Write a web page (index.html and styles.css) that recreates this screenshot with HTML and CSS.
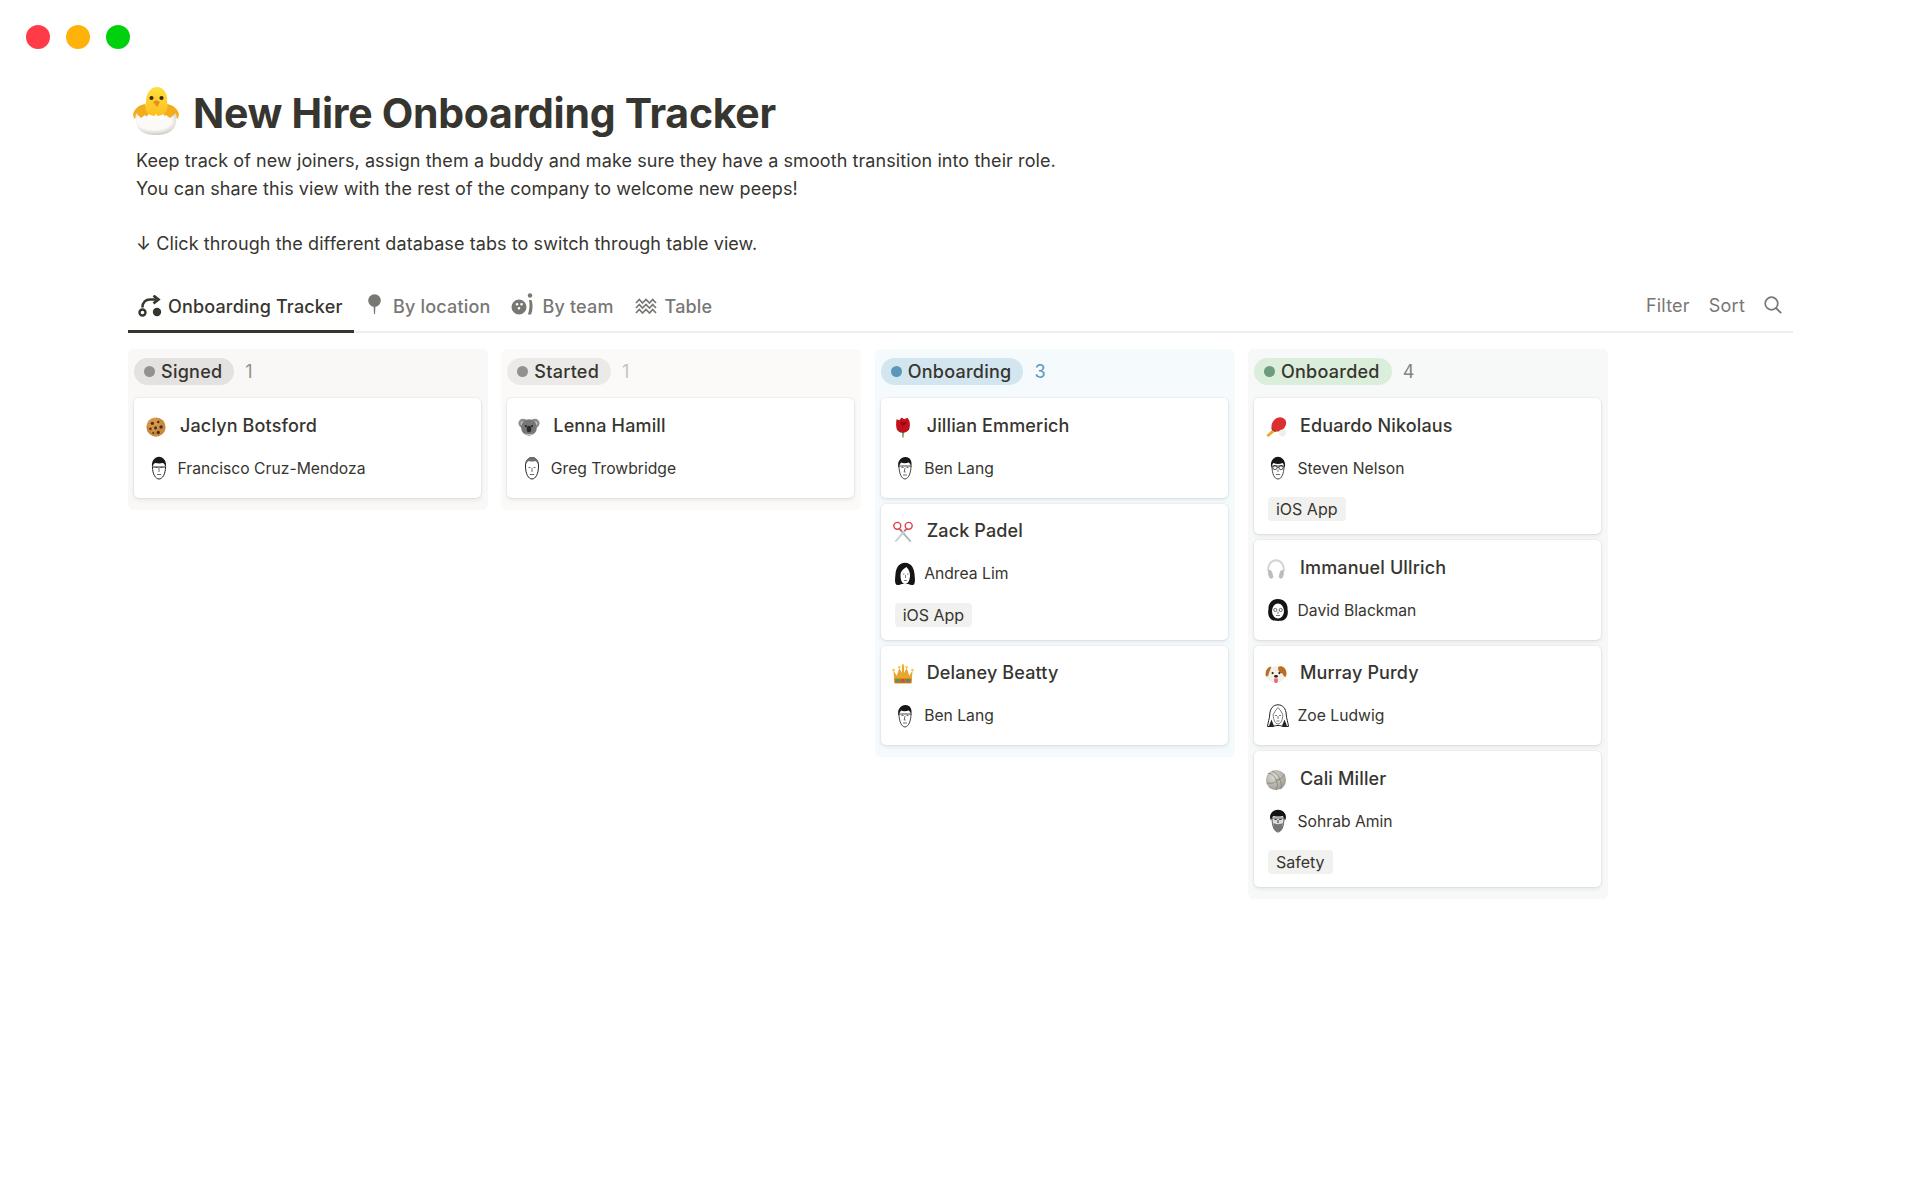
FILE: index.html
```html
<!DOCTYPE html>
<html lang="en">
<head>
<meta charset="utf-8">
<title>New Hire Onboarding Tracker</title>
<link rel="stylesheet" href="styles.css">
</head>
<body>
<svg class="defs" aria-hidden="true">
  <defs>
    <radialGradient id="g-egg" cx="0.45" cy="0.35" r="0.75"><stop offset="0.55" stop-color="#fbfaf6"/><stop offset="1" stop-color="#bdb9ae"/></radialGradient>
    <linearGradient id="g-chick" x1="0" y1="0" x2="0" y2="1"><stop offset="0" stop-color="#ffdf3c"/><stop offset="1" stop-color="#fbbf1f"/></linearGradient>
    <radialGradient id="g-ball" cx="0.4" cy="0.35" r="0.75"><stop offset="0" stop-color="#dddbd4"/><stop offset="1" stop-color="#97948b"/></radialGradient>
    <symbol id="e-cookie" viewBox="0 0 24 24"><circle cx="12" cy="12" r="10.5" fill="#c98a3c"/><circle cx="10" cy="9" r="7" fill="#dda04e" opacity=".6"/><circle cx="8" cy="8" r="1.8" fill="#4d3022"/><circle cx="14.5" cy="6.5" r="1.4" fill="#4d3022"/><circle cx="17.5" cy="12" r="1.9" fill="#4d3022"/><circle cx="11.5" cy="13" r="1.7" fill="#4d3022"/><circle cx="6" cy="14" r="1.4" fill="#4d3022"/><circle cx="14.5" cy="18" r="1.8" fill="#4d3022"/><circle cx="9" cy="18.5" r="1.1" fill="#4d3022"/></symbol>
    <symbol id="e-koala" viewBox="0 0 24 24"><circle cx="5.5" cy="8" r="5" fill="#8d8c8a"/><circle cx="18.5" cy="8" r="5" fill="#8d8c8a"/><circle cx="5.5" cy="8.5" r="2.7" fill="#c6c4bf"/><circle cx="18.5" cy="8.5" r="2.7" fill="#c6c4bf"/><ellipse cx="12" cy="12.5" rx="8.6" ry="9" fill="#777674"/><circle cx="8.6" cy="11" r="1.1" fill="#1e1e1e"/><circle cx="15.4" cy="11" r="1.1" fill="#1e1e1e"/><ellipse cx="12" cy="14.2" rx="2.5" ry="3.6" fill="#2b2b2b"/><path d="M6 18.5c3 3.5 9 3.5 12 0-2 .8-3.7 1.2-6 1.2s-4-.4-6-1.2z" fill="#c6c4bf"/></symbol>
    <symbol id="e-rose" viewBox="0 0 24 24"><path d="M11.3 17h1.4l-.2 6.5h-1z" fill="#3f6b2a"/><path d="M4.7 13c1.500 4 4 5 7 5.500 3-.5 5.500-1.500 7-5.500-1.500 3-3 3.500-7 3.500s-5.500-.5-7-3.500z" fill="#3f6b2a"/><path d="M5 3.500l3 1.200L10.500 1.500l2.800 2L17 2l2 3.500c.8 3.500.8 7-.5 9.500-1.800 2-4.500 2.800-6.700 2.800S7 17 5.300 14.800C4.200 11 4.300 7 5 3.500z" fill="#c4101c"/><path d="M9 6c2 1.500 4.500 1.500 6.500 0-.2 2.500-1.500 4-3 4.500C10.700 10 9.300 8.500 9 6z" fill="#8c0a14"/></symbol>
    <symbol id="e-scissors" viewBox="0 0 24 24"><path d="M8 10l11.500 13 1.700-1L10 9z" fill="#a9b4bc"/><path d="M16 10L4.500 23l-1.700-1L14 9z" fill="#c5ced4"/><circle cx="5.800" cy="5.300" r="3.800" fill="none" stroke="#e0434b" stroke-width="1.600"/><circle cx="18.200" cy="5.300" r="3.800" fill="none" stroke="#e0434b" stroke-width="1.600"/><path d="M8 8.500l2.500 2.500M16 8.500L13.500 11" stroke="#e0434b" stroke-width="1.600"/></symbol>
    <symbol id="e-crown" viewBox="0 0 24 24"><path d="M1.500 8l3.700 6L8 5.500l4 7.500 4-7.500 2.800 8.500L22.500 8l-1.300 14H2.800z" fill="#e8a62c"/><path d="M2.600 17h18.800l-.4 5H3z" fill="#b97a1e"/><circle cx="1.800" cy="7.500" r="1.300" fill="#f6c344"/><circle cx="8" cy="4.500" r="1.300" fill="#f6c344"/><circle cx="12" cy="2.500" r="1.300" fill="#f6c344"/><circle cx="16" cy="4.500" r="1.300" fill="#f6c344"/><circle cx="22.200" cy="7.500" r="1.300" fill="#f6c344"/><path d="M12 3v10" stroke="#e8a62c" stroke-width="2.400"/><circle cx="6.500" cy="19" r="1.600" fill="#3a9c86"/><circle cx="12" cy="19" r="1.600" fill="#d2473f"/><circle cx="17.500" cy="19" r="1.600" fill="#3f7fc2"/></symbol>
    <symbol id="e-paddle" viewBox="0 0 24 24"><path d="M9.500 13.500l2.500 2.500-8.500 7-2-2z" fill="#eda72b"/><path d="M7 11.500C7.500 5.500 12 1 17.500 1.500c4 .5 6 3.500 5.500 7-.6 4.500-5 9-11.500 8.500-3-1.500-4.500-3-4.500-5.500z" fill="#dd2f30"/><path d="M7 12.500c1.500 2 3 3.500 5.500 4.500l-1.200.3c-2.800-1.300-4.300-3-4.500-4.300z" fill="#7c1f1b"/><circle cx="19" cy="18.500" r="3.800" fill="#f1efe8"/></symbol>
    <symbol id="e-phones" viewBox="0 0 24 24"><path d="M3.500 14.500C3 7.500 6.500 2.500 12 2.500s9 5 8.500 12" fill="none" stroke="#d4d4d2" stroke-width="2.200"/><path d="M3.500 13.500c2-.8 3.700 0 4.300 2l1.200 4.500c.4 1.800-2.600 3.500-3.800 1.800-1.600-2.200-2.200-5-1.700-8.300z" fill="#bdbdba"/><path d="M20.500 13.500c-2-.8-3.700 0-4.300 2L15 20c-.4 1.800 2.600 3.500 3.800 1.800 1.600-2.200 2.200-5 1.700-8.300z" fill="#bdbdba"/></symbol>
    <symbol id="e-dog" viewBox="0 0 24 24"><ellipse cx="12" cy="12.500" rx="10" ry="9" fill="#f4f0e8"/><path d="M14.500 4.200c2-1.200 5-.6 7 1.500 2 2.500 2.500 6 1.500 9-1 .6-2 .2-2.700-.8-.3-2.600-2.600-3-4-3.400-1.500-1-2.500-4.300-1.800-6.300z" fill="#b96f22"/><path d="M7 4C4 3.700 1.800 6 .9 9.500.4 11.800.6 13.500 1.300 14.800c1.200.3 2-.6 2.500-2 .6-2.800 1.800-5.600 3.200-8.800z" fill="#b96f22"/><circle cx="8.300" cy="11" r="1.200" fill="#2b241c"/><circle cx="15.700" cy="11" r="1.200" fill="#2b241c"/><ellipse cx="12" cy="14.500" rx="2.200" ry="1.500" fill="#2b241c"/><path d="M10 17h4v2.500c0 3-4 3-4 0z" fill="#e5677d"/></symbol>
    <symbol id="e-ball" viewBox="0 0 24 24"><circle cx="12" cy="12" r="11" fill="url(#g-ball)"/><path d="M12 12C10 7 6.500 4 3 5M12 12c5-.5 8.500-3 9.500-6.500M12 12c2.500 4 2 8.500-.5 11M7.500 2.500c4 1 7.500 4 9 9.500M2 15c4.500 1.500 9 .5 13-3.500M17 22c1.500-3.500 1-7-1-10.500" fill="none" stroke="#7f7c73" stroke-width=".8"/></symbol>
    <symbol id="f-francisco" viewBox="0 0 24 24"><path d="M5.500 11c0 7 3 12 6.500 12s6.500-5 6.500-12z" fill="#fff" stroke="#222" stroke-width="1"/><path d="M5.200 12C3.800 5 8 .8 12 .8S20.200 5 18.800 12c-.8-3-1.500-4.500-3-5-2.500.6-5 .6-7.500 0-1.500.5-2.300 2-3.100 5z" fill="#1a1a1a"/><path d="M8.500 11.500h2M13.500 11.500h2M12 12v4M10 18.500h4" stroke="#444" stroke-width=".8" fill="none"/></symbol>
    <symbol id="f-greg" viewBox="0 0 24 24"><path d="M5.500 10c0 8 3 13 6.500 13s6.500-5 6.500-13C18.500 4 15.500 1.500 12 1.500S5.500 4 5.500 10z" fill="#fff" stroke="#222" stroke-width="1"/><path d="M5.500 9.500C6 4 9 1 12 1s6 3 6.500 8.500c-1-2.500-2-4-3.500-4.500-2 .7-4 .7-6 0C7.500 5.500 6.500 7 5.500 9.500z" fill="#6f6f6f"/><path d="M8.500 11.500h2M13.500 11.500h2M12 12v4M9.800 18.500h4.400" stroke="#444" stroke-width=".8" fill="none"/></symbol>
    <symbol id="f-ben" viewBox="0 0 24 24"><path d="M6 10c0 7 2.500 13 6 13 3.500-.3 6-6 6-13z" fill="#fff" stroke="#333" stroke-width=".9"/><path d="M5.500 12C3.800 5 8 1 12.500 1c4.500 0 7 4 5.800 10.500-.6-2.500-1.300-4-2.500-5-3 1-5.500 1-7.800 0-1 1.500-2 3-2.500 5.500z" fill="#161616"/><path d="M8.500 11.500h2M13.500 11.500h2M12 12l-.8 4h1.500M10 19h4" stroke="#444" stroke-width=".8" fill="none"/></symbol>
    <symbol id="f-andrea" viewBox="0 0 24 24"><path d="M12 .8C6 .8 3 6 2.500 12c-.4 4.500-1 8 .5 10.500 2 1 4 .5 5.500-.5h7c1.500 1 3.500 1.500 5.500.5 1.500-2.500.9-6 .5-10.500C21 6 18 .8 12 .8z" fill="#141414"/><path d="M7.500 13c0-3.500 3-6.500 6-8 2 2 3.500 5 3.500 8 0 5-2 9-5 9s-4.500-4-4.500-9z" fill="#fff"/><path d="M10 12h1.500M14 12h1.500M12.500 13v3M11 18.500h3" stroke="#444" stroke-width=".7" fill="none"/></symbol>
    <symbol id="f-steven" viewBox="0 0 24 24"><path d="M6 10c0 8 2.500 13 6 13s6-5 6-13z" fill="#fff" stroke="#333" stroke-width=".9"/><path d="M5.300 12C3.500 5 8 .8 12 .8s8.500 4.200 6.700 11.200c-.5-2.500-1.200-4-2.200-5-3 1.200-6 1.200-9 0-1 1-1.700 2.500-2.200 5z" fill="#161616"/><circle cx="9" cy="11.500" r="2.100" fill="none" stroke="#222" stroke-width=".8"/><circle cx="15" cy="11.500" r="2.100" fill="none" stroke="#222" stroke-width=".8"/><path d="M11.100 11.500h1.800M12 13.500v2.500M9.800 18.500h4.400" stroke="#333" stroke-width=".7" fill="none"/></symbol>
    <symbol id="f-david" viewBox="0 0 24 24"><path d="M12 1C6 1 2 5.500 2.500 11c-1 4 0 9 3.500 11 2 1 3.800.6 6 1 2.200-.4 4-.1 6-1 3.500-2 4.500-7 3.500-11C22 5.500 18 1 12 1z" fill="#141414"/><ellipse cx="12" cy="13" rx="6" ry="7.500" fill="#fff"/><circle cx="9.300" cy="12" r="1.600" fill="none" stroke="#333" stroke-width=".7"/><circle cx="14.700" cy="12" r="1.600" fill="none" stroke="#333" stroke-width=".7"/><path d="M12 13.500v2.500M10 17.500h4" stroke="#444" stroke-width=".7" fill="none"/></symbol>
    <symbol id="f-zoe" viewBox="0 0 24 24"><path d="M12 .8C7 .8 4 5 3.800 10c-.2 5-2 8.500-2.300 12.500h6c1.500-1 3-1 4.500-1s3 0 4.500 1h6c-.3-4-2.100-7.500-2.300-12.500C20 5 17 .8 12 .8z" fill="#fff" stroke="#222" stroke-width="1"/><path d="M3 22.500c.5-3 1.800-5 2.700-7 .8 3 1.800 5.500 2.800 7zM21 22.500c-.5-3-1.800-5-2.700-7-.8 3-1.800 5.500-2.800 7z" fill="#222"/><path d="M7.200 10.500C8.500 8 10 5.500 12 3.500c2 2 3.500 4.500 4.800 7M7.200 10.500c0 5 2 9.500 4.800 9.500s4.800-4.500 4.800-9.500M9 11.500h2M13 11.500h2M12 12v3M10.500 17h3" fill="none" stroke="#444" stroke-width=".7"/></symbol>
    <symbol id="f-sohrab" viewBox="0 0 24 24"><path d="M6 9c0 8 2.500 14 6 14s6-6 6-14z" fill="#ddd" stroke="#333" stroke-width=".8"/><path d="M7 14c1 4 .5 8.500 5 8.500s4-4.500 5-8.500c-2 1.500-8 1.500-10 0z" fill="#777"/><path d="M5 11.500C2 6 6.500.8 12 .8s10 5.200 7 10.700c-.5-2-1.300-3.500-2.500-4.500-3 .8-6 .8-9 0-1.200 1-2 2.500-2.500 4.500z" fill="#141414"/><path d="M8.500 10.500h2.300M13.200 10.500h2.300M12 11v3" stroke="#222" stroke-width=".9" fill="none"/></symbol>
  </defs>
</svg>

<div class="lights">
  <span class="light red"></span>
  <span class="light amber"></span>
  <span class="light green"></span>
</div>

<main class="page">
  <header class="title-row">
    <svg class="chick" viewBox="0 0 48 48" aria-hidden="true">
      <path d="M1 27c2-6 6-9 12-10l4 10-7 7-2-3-2 3-2-4-2 2z" fill="#f2ad1e"/>
      <path d="M47 27c-2-6-6-9-12-10l-4 10 7 7 2-3 2 3 2-4 2 2z" fill="#f2ad1e"/>
      <path d="M14 15c0-9 5-15 11-15s11 6 10 15c2 6-1 14-11 14S12 21 14 15z" fill="url(#g-chick)"/>
      <circle cx="19.500" cy="11" r="2.100" fill="#3a2a14"/>
      <circle cx="29.500" cy="11" r="2.100" fill="#3a2a14"/>
      <path d="M21 15l3.500-2 3.500 2-3 5z" fill="#e98d1c"/>
      <path d="M4 26l5 5 4-3 5 6 6-7 5 6 5-5 4 3 6-5c2 12-2 22-20 22S2 38 4 26z" fill="url(#g-egg)"/>
    </svg>
    <h1 class="title">New Hire Onboarding Tracker</h1>
  </header>

  <section class="intro">
    <p>Keep track of new joiners, assign them a buddy and make sure they have a smooth transition into their role.</p>
    <p>You can share this view with the rest of the company to welcome new peeps!</p>
    <p class="spaced">↓ Click through the different database tabs to switch through table view.</p>
  </section>

  <nav class="tabs">
    <a class="tab active">
      <svg class="tab-icon route" viewBox="0 0 24 22" aria-hidden="true"><circle cx="4.500" cy="17.500" r="3" fill="none" stroke="currentColor" stroke-width="2.400"/><circle cx="19" cy="17" r="4.200" fill="currentColor"/><path d="M4.500 12.500C4.500 7 8 4.500 12 4.500h6" fill="none" stroke="currentColor" stroke-width="2.600"/><path d="M15.500 .6l5 3.900-5 3.900" fill="none" stroke="currentColor" stroke-width="2.600"/></svg>
      <span>Onboarding Tracker</span>
    </a>
    <a class="tab">
      <svg class="tab-icon pin" viewBox="0 0 15 20" aria-hidden="true"><circle cx="7.500" cy="6.500" r="6.300" fill="currentColor"/><path d="M6.500 11h2l-.5 9H7z" fill="currentColor"/></svg>
      <span>By location</span>
    </a>
    <a class="tab">
      <svg class="tab-icon bowl" viewBox="0 0 22 22" aria-hidden="true"><path fill-rule="evenodd" d="M8 6.500a7.500 7.500 0 1 1 0 15 7.500 7.500 0 0 1 0-15zM6 10a1.300 1.300 0 1 0 0 2.600A1.300 1.300 0 0 0 6 10zm4.500 0a1.300 1.300 0 1 0 0 2.600 1.300 1.300 0 0 0 0-2.600zM8 14a1.300 1.300 0 1 0 0 2.600A1.300 1.300 0 0 0 8 14z" fill="currentColor"/><circle cx="19" cy="2.500" r="2.200" fill="currentColor"/><path d="M18 7h2.500c1.500 4 1.500 10-.5 14.500h-3c1.500-5 2-10 1-14.500z" fill="currentColor"/></svg>
      <span>By team</span>
    </a>
    <a class="tab">
      <svg class="tab-icon waves" viewBox="0 0 22 16" aria-hidden="true"><path d="M1 5l3.300-3.500L7.500 5l3.500-3.500L14.500 5l3.200-3.500L21 5M1 10l3.300-3.500L7.500 10 11 6.500l3.500 3.500 3.200-3.500L21 10M1 15l3.300-3.500L7.500 15l3.500-3.500 3.500 3.500 3.200-3.500L21 15" fill="none" stroke="currentColor" stroke-width="1.700"/></svg>
      <span>Table</span>
    </a>
    <div class="tools">
      <span>Filter</span>
      <span>Sort</span>
      <svg class="search" viewBox="0 0 18 18" aria-hidden="true"><circle cx="7.500" cy="7.500" r="6.300" fill="none" stroke="currentColor" stroke-width="1.700"/><path d="M12 12l5.200 5.200" stroke="currentColor" stroke-width="1.900" fill="none"/></svg>
    </div>
  </nav>

  <section class="board">
    <div class="column col-signed">
      <div class="col-head"><span class="pill"><i class="dot"></i>Signed</span><span class="count">1</span></div>
      <article class="card">
        <div class="name-row"><svg class="emoji"><use href="#e-cookie"/></svg><span>Jaclyn Botsford</span></div>
        <div class="person"><svg class="face"><use href="#f-francisco"/></svg><span>Francisco Cruz-Mendoza</span></div>
      </article>
    </div>

    <div class="column col-started">
      <div class="col-head"><span class="pill"><i class="dot"></i>Started</span><span class="count">1</span></div>
      <article class="card">
        <div class="name-row"><svg class="emoji"><use href="#e-koala"/></svg><span>Lenna Hamill</span></div>
        <div class="person"><svg class="face"><use href="#f-greg"/></svg><span>Greg Trowbridge</span></div>
      </article>
    </div>

    <div class="column col-onboarding">
      <div class="col-head"><span class="pill"><i class="dot"></i>Onboarding</span><span class="count">3</span></div>
      <article class="card">
        <div class="name-row"><svg class="emoji"><use href="#e-rose"/></svg><span>Jillian Emmerich</span></div>
        <div class="person"><svg class="face"><use href="#f-ben"/></svg><span>Ben Lang</span></div>
      </article>
      <article class="card">
        <div class="name-row"><svg class="emoji"><use href="#e-scissors"/></svg><span>Zack Padel</span></div>
        <div class="person"><svg class="face"><use href="#f-andrea"/></svg><span>Andrea Lim</span></div>
        <span class="tag">iOS App</span>
      </article>
      <article class="card">
        <div class="name-row"><svg class="emoji"><use href="#e-crown"/></svg><span>Delaney Beatty</span></div>
        <div class="person"><svg class="face"><use href="#f-ben"/></svg><span>Ben Lang</span></div>
      </article>
    </div>

    <div class="column col-onboarded">
      <div class="col-head"><span class="pill"><i class="dot"></i>Onboarded</span><span class="count">4</span></div>
      <article class="card">
        <div class="name-row"><svg class="emoji"><use href="#e-paddle"/></svg><span>Eduardo Nikolaus</span></div>
        <div class="person"><svg class="face"><use href="#f-steven"/></svg><span>Steven Nelson</span></div>
        <span class="tag">iOS App</span>
      </article>
      <article class="card">
        <div class="name-row"><svg class="emoji"><use href="#e-phones"/></svg><span>Immanuel Ullrich</span></div>
        <div class="person"><svg class="face"><use href="#f-david"/></svg><span>David Blackman</span></div>
      </article>
      <article class="card">
        <div class="name-row"><svg class="emoji"><use href="#e-dog"/></svg><span>Murray Purdy</span></div>
        <div class="person"><svg class="face"><use href="#f-zoe"/></svg><span>Zoe Ludwig</span></div>
      </article>
      <article class="card">
        <div class="name-row"><svg class="emoji"><use href="#e-ball"/></svg><span>Cali Miller</span></div>
        <div class="person"><svg class="face"><use href="#f-sohrab"/></svg><span>Sohrab Amin</span></div>
        <span class="tag">Safety</span>
      </article>
    </div>
  </section>
</main>
</body>
</html>
```

FILE: styles.css
```css
* { box-sizing: border-box; }

html, body { margin: 0; padding: 0; background: #fff; }

body {
  height: 1200px;
  overflow: hidden;
  font-family: Inter, "Liberation Sans", sans-serif;
  color: #37352f;
}

.defs { position: absolute; width: 0; height: 0; overflow: hidden; }

.lights {
  display: flex;
  gap: 16px;
  height: 74px;
  padding: 25px 0 0 26px;
}
.light { width: 24px; height: 24px; border-radius: 50%; }
.red { background: #ff3b47; }
.amber { background: #ffb30a; }
.green { background: #00d10f; }

.page { width: 1665px; margin-left: 128px; }

.title-row {
  display: flex;
  align-items: center;
  height: 72px;
  padding: 6px 0 0 4px;
  gap: 13px;
}
.chick { width: 48px; height: 48px; margin-top: -5px; flex: none; }
.title { margin: 0; font-size: 41px; font-weight: 700; letter-spacing: -0.28px; line-height: 50px; }

.intro { margin-top: 1px; padding-left: 8px; font-size: 18px; line-height: 28px; letter-spacing: 0.08px; }
.intro p { margin: 0; }
.intro .spaced { margin-top: 27px; }

.tabs {
  display: flex;
  align-items: stretch;
  height: 53px;
  margin-top: 22px;
  border-bottom: 2px solid #eeeeec;
  color: #787774;
  font-size: 18px;
  font-weight: 500;
  letter-spacing: 0.17px;
}
.tab {
  display: flex;
  align-items: center;
  gap: 7px;
  padding: 2px 11px 0 10px;
  margin-bottom: -2px;
  border-bottom: 3px solid transparent;
}
.tab.active { gap: 6px; color: #37352f; border-bottom-color: #37352f; }

.tab-icon { flex: none; }
.route { width: 24px; height: 22px; }
.pin { width: 15px; height: 20px; margin: -4px 4px 0 3.5px; }
.bowl { width: 22px; height: 22px; margin-top: -4px; margin-right: 2px; }
.waves { width: 22px; height: 16px; margin-right: 1px; }

.tools {
  display: flex;
  align-items: center;
  gap: 19px;
  margin-left: auto;
  padding: 0 11px 1px 0;
  font-weight: 400;
  letter-spacing: 0.22px;
}
.search { width: 18px; height: 18px; }

.board {
  display: grid;
  grid-template-columns: repeat(4, 360px);
  column-gap: 13.33px;
  align-items: start;
  margin-top: 16px;
}

.column {
  display: flex;
  flex-direction: column;
  gap: 6px;
  padding: 9px 7px 12px 6px;
  border-radius: 6px;
}

.col-head { display: flex; align-items: center; height: 27px; margin-bottom: 7px; font-size: 18px; letter-spacing: 0.25px; }

.pill {
  display: flex;
  align-items: center;
  gap: 6px;
  height: 27px;
  padding: 0 12px 0 10px;
  border-radius: 14px;
  font-weight: 500;
}
.dot { width: 11px; height: 11px; border-radius: 50%; }
.count { margin-left: 11px; }

.col-signed { background: #f9f8f7; }
.col-signed .pill { background: #e3e2e0; }
.col-signed .dot { background: #91918e; }
.col-signed .count { color: #91918e; }

.col-started { background: #fbfaf9; }
.col-started .pill { background: #ebeae8; }
.col-started .dot { background: #91918e; }
.col-started .count { color: #c3c2bf; }

.col-onboarding { background: #f5fafc; }
.col-onboarding .pill { background: #d3e5ef; }
.col-onboarding .dot { background: #5b97bd; }
.col-onboarding .count { color: #5b97bd; }

.col-onboarded { background: #f6f9f7; }
.col-onboarded .pill { background: #dbeddb; }
.col-onboarded .dot { background: #6c9b7d; }
.col-onboarded .count { color: #838381; }

.card {
  display: flex;
  flex-direction: column;
  align-items: flex-start;
  padding: 13px 11px 13px;
  background: #fff;
  border-radius: 5px;
  box-shadow: 0 0 0 1px rgba(15, 15, 15, 0.04), 0 2px 4px rgba(15, 15, 15, 0.08);
}

.name-row {
  display: flex;
  align-items: center;
  height: 28px;
  gap: 13px;
  font-size: 18px;
  font-weight: 500;
  letter-spacing: 0.14px;
}
.emoji { width: 22px; height: 22px; flex: none; margin-top: 3px; }

.person {
  display: flex;
  align-items: center;
  height: 28px;
  margin: 15px 0 2.5px 1.5px;
  gap: 7px;
  font-size: 15.7px;
}
.face { width: 24px; height: 24px; flex: none; }

.tag {
  display: flex;
  align-items: center;
  height: 24px;
  margin: 12.5px 0 0 3px;
  padding: 0 8px;
  background: #f1f1ef;
  border-radius: 4px;
  font-size: 16px;
}
```
